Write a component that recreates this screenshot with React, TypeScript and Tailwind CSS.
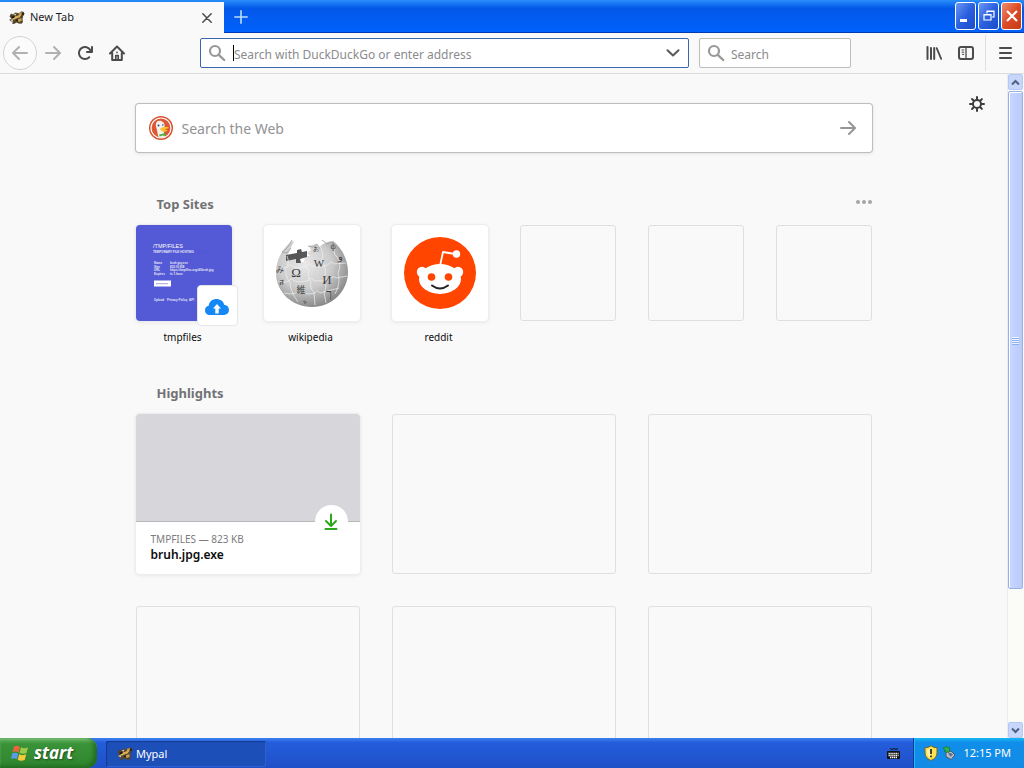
import type { ReactNode } from "react";

const UI = "font-['Noto_Sans','Open_Sans',sans-serif]";

function PalLogo({ className }: { className: string }) {
  return (
    <svg viewBox="0 0 16 16" className={className} aria-hidden="true">
      <path d="M.5 6.500 2 3.500 4 4.500 6.500 2.500 10 3.200 12 1.500 14.500 1.800 15.500 4 14 6.500 13.500 9.500 14 12 12.500 13.800 9.500 13.500 7.500 12.500 5 14 3 13.500 4 11.500 1.500 11.200.3 9.500 2.500 8.500z" fill="#54452c" />
      <path d="M10.500 2.500 13 2.300 12 6 9 7zM8.500 9.500 12.500 8 12.500 11 9.500 12z" fill="#c9a255" />
      <path d="M3 8C6 5.500 8.500 6.200 11.500 4.800L11 7.200 8 8.300 5 9.800z" fill="#dcae55" />
      <path d="M.8 9.700 4.500 9.200 3.500 11.200zM4.500 4.800 7.500 3.500 6.500 5.500z" fill="#e8e2d2" />
      <path d="M2.500 6.500 6 6 5 8 3 8zM13.300 2.200 15.300 3.800 13.500 5.200zM6.500 10 9 9.200 8.500 11.500z" fill="#17130d" />
    </svg>
  );
}

function Lens() {
  return (
    <svg viewBox="0 0 18 18" className="h-[18px] w-[18px] shrink-0" fill="none" stroke="#989899" aria-hidden="true">
      <circle cx="7" cy="7" r="5" strokeWidth="2.200" />
      <path d="m10.800 10.800 5.400 5.200" strokeWidth="2.400" strokeLinecap="round" />
    </svg>
  );
}

function ToolButton({ label, children }: { label: string; children: ReactNode }) {
  return (
    <button type="button" aria-label={label} className="flex h-8 w-8 shrink-0 items-center justify-center text-[#4b4b4d]">
      {children}
    </button>
  );
}

function BackArrow({ className }: { className: string }) {
  return (
    <svg viewBox="0 0 16 16" className={className} fill="currentColor" aria-hidden="true">
      <path d="M15 7H3.414l4.293-4.293a1 1 0 0 0-1.414-1.414l-6 6a1 1 0 0 0 0 1.414l6 6a1 1 0 0 0 1.414-1.414L3.414 9H15a1 1 0 0 0 0-2z" />
    </svg>
  );
}

function TitleBar() {
  const box = "flex h-7 w-[21px] items-center justify-center rounded-[3px] border border-white";
  const blue = "bg-linear-to-br from-[#6b96f2] via-[#2a5fdf] to-[#1c4cc9]";
  return (
    <header className="flex h-[33px] shrink-0 bg-linear-to-b from-[#2b8dfa] from-0% via-[#0358e8] via-25% to-[#0060fa] to-90% shadow-[inset_0_-1px_0_#0039b0]">
      <div className="mt-[2px] flex w-56 items-center bg-[#f9f9fa] pr-2 pl-[9px]">
        <PalLogo className="h-4 w-4" />
        <span className="ml-[5px] flex-1 text-[11px] text-[#1c1c1e]">New Tab</span>
        <button type="button" aria-label="Close tab" className="flex h-[18px] w-[18px] items-center justify-center">
          <svg viewBox="0 0 10 10" className="h-[10px] w-[10px]" stroke="#4b4b4d" strokeWidth="1.500" strokeLinecap="round" aria-hidden="true">
            <path d="m.8.8 8.400 8.400M9.200.8.8 9.200" />
          </svg>
        </button>
      </div>
      <button type="button" aria-label="New tab" className="flex w-[34px] items-center justify-center">
        <svg viewBox="0 0 14 14" className="h-[14px] w-[14px]" stroke="#b9dcff" strokeWidth="1.600" strokeLinecap="round" aria-hidden="true">
          <path d="M7 .8v12.400M.8 7h12.400" />
        </svg>
      </button>
      <div className="flex-1" />
      <div className="flex gap-[2px] pt-[2px] pr-[2px]">
        <button type="button" aria-label="Minimize" className={`${box} ${blue}`}>
          <span className="mt-[9px] mr-[5px] h-[3px] w-[7px] bg-white" />
        </button>
        <button type="button" aria-label="Restore" className={`${box} ${blue}`}>
          <svg viewBox="0 0 12 12" className="h-3 w-3" fill="none" stroke="#fff" aria-hidden="true">
            <path d="M4 3.500V1h7v6H9M4 1.500h7M1 4.500h7V10H1zM1 5h7" strokeWidth="1.200" />
          </svg>
        </button>
        <button type="button" aria-label="Close" className={`${box} bg-linear-to-br from-[#ee8a6c] via-[#dd4b26] to-[#c23a17]`}>
          <svg viewBox="0 0 12 12" className="h-3 w-3" stroke="#fff" strokeWidth="2.200" aria-hidden="true">
            <path d="m1 1 10 10M11 1 1 11" />
          </svg>
        </button>
      </div>
    </header>
  );
}

function Toolbar() {
  return (
    <nav className="flex h-[41px] shrink-0 items-center border-b border-[#dcdcdf] bg-[#f9f9fa] pr-[6px]">
      <button type="button" aria-label="Back" className="ml-[3px] flex h-[34px] w-[34px] shrink-0 items-center justify-center rounded-full border border-[#d3d3d5] bg-[#fbfbfc] text-[#b1b1b3]">
        <BackArrow className="h-4 w-4" />
      </button>
      <button type="button" aria-label="Forward" className="flex h-8 w-8 shrink-0 items-center justify-center text-[#b1b1b3]">
        <BackArrow className="h-4 w-4 rotate-180" />
      </button>
      <ToolButton label="Reload">
        <svg viewBox="0 0 16 16" className="h-4 w-4" fill="currentColor" aria-hidden="true">
          <path d="M15 1a1 1 0 0 0-1 1v2.418A6.995 6.995 0 1 0 8 15a6.954 6.954 0 0 0 4.950-2.050 1 1 0 0 0-1.414-1.414A5.019 5.019 0 1 1 12.549 6H10a1 1 0 0 0 0 2h5a1 1 0 0 0 1-1V2a1 1 0 0 0-1-1z" />
        </svg>
      </ToolButton>
      <ToolButton label="Home">
        <svg viewBox="0 0 16 16" className="h-4 w-4" fill="none" stroke="currentColor" strokeWidth="2" strokeLinecap="round" strokeLinejoin="round" aria-hidden="true">
          <path d="m1 8.500 7-7 7 7M3.200 8v7h9.600V8" />
          <path d="M6.800 15v-4.500h2.400V15M8 7.400v.1" strokeWidth="1.700" />
        </svg>
      </ToolButton>
      <div className="ml-[67px] flex h-[30px] max-w-[489px] flex-1 items-center rounded-[2px] border border-[#3a66b0] bg-white pr-[7px] pl-[7px]">
        <Lens />
        <span className="ml-[7px] h-4 w-px bg-black" />
        <input id="address" aria-label="Address" placeholder="Search with DuckDuckGo or enter address" className="h-full min-w-0 flex-1 pt-[2px] text-[12px] text-black outline-none placeholder:text-[#8b8b8d]" />
        <button type="button" aria-label="Show history" className="flex h-4 w-4 items-center justify-center">
          <svg viewBox="0 0 14 8" className="h-2 w-[14px]" fill="none" stroke="#59595b" strokeWidth="2" strokeLinecap="round" strokeLinejoin="round" aria-hidden="true">
            <path d="m1.500 1.200 5.500 5.300 5.500-5.300" />
          </svg>
        </button>
      </div>
      <div className="ml-[10px] flex h-[30px] w-38 items-center rounded-[2px] border border-[#bdbdbf] bg-white pr-2 pl-[7px]">
        <Lens />
        <input id="engine" aria-label="Search" placeholder="Search" className="ml-[6px] h-full min-w-0 flex-1 pt-[2px] text-[12px] text-black outline-none placeholder:text-[#8b8b8d]" />
      </div>
      <div className="ml-auto flex h-full items-center">
        <ToolButton label="Library">
          <svg viewBox="0 0 16 16" className="h-4 w-4" fill="none" stroke="currentColor" strokeLinecap="round" aria-hidden="true">
            <path d="M1.500 2v12M5 3v11M8.200 3v11" strokeWidth="2" />
            <path d="m10.700 3.200 4.500 10.600" strokeWidth="1.800" />
          </svg>
        </ToolButton>
        <ToolButton label="Sidebars">
          <svg viewBox="0 0 16 16" className="h-4 w-4" fill="none" stroke="currentColor" aria-hidden="true">
            <rect x="1" y="2" width="14" height="12" rx="2" strokeWidth="2" />
            <path d="M8 2v12" strokeWidth="1.300" />
            <path d="M3.500 5h2.700M3.500 7.200h2.700M4 9.400h2.200" strokeWidth="1" />
          </svg>
        </ToolButton>
        <div className="ml-[3px] h-9 w-px bg-[#dfdfe1]" />
        <ToolButton label="Menu">
          <svg viewBox="0 0 16 16" className="ml-[5px] h-4 w-4" stroke="currentColor" strokeWidth="2" strokeLinecap="round" aria-hidden="true">
            <path d="M3 3h11M3 8h11M3 13h11" />
          </svg>
        </ToolButton>
      </div>
    </nav>
  );
}

function DuckLogo() {
  return (
    <svg viewBox="0 0 24 24" className="h-6 w-6" aria-hidden="true">
      <circle cx="12" cy="12" r="12" fill="#d9512f" />
      <circle cx="12" cy="12" r="10" fill="#de5833" stroke="#fff" strokeWidth="1.200" />
      <path d="M8 5.500c1.500-1.300 5-1.200 6.700 1.300 1.100 1.700 1 3.700.8 5.200l-.7 3.500 1.200 5.700c-2 .8-4.600.9-6.500.2L7.700 13C7 10.500 6 8.200 8 5.500z" fill="#f4f1ea" />
      <path d="M11.500 12.200c2-1.200 5.600-1.500 7.800-1 .6.300.2 1-.8 1.300-1.600.5-2.500.6-2.300 1 .4.600 2.400.3 2.200.9-.4 1.200-4 1.500-5.800.5-1.100-.7-1.700-2-1.100-2.700z" fill="#fbc02d" />
      <path d="M10.200 18.500 13 18l3.200-1.200.6 3.200-3.300-.6-3 1z" fill="#4caf3d" />
      <circle cx="9.500" cy="9.500" r="1" fill="#2d4f8e" />
      <circle cx="13.800" cy="9" r=".8" fill="#2d4f8e" />
    </svg>
  );
}

function Globe() {
  return (
    <svg viewBox="0 0 76 72" className="h-[72px] w-[76px]" aria-hidden="true">
      <defs>
        <radialGradient id="globe" cx="40%" cy="35%" r="68%">
          <stop offset="0" stopColor="#e8e8e8" />
          <stop offset=".55" stopColor="#cbcbcb" />
          <stop offset="1" stopColor="#858585" />
        </radialGradient>
      </defs>
      <path d="M17 5 20 4 15 15 13 20 24 20 25 25 30 25 31 19 36 19 33 16 37 13 35 9 42 7 45 10 49 7 54 5 59 4C69 12 74 24 74 35c0 19-16 35-36 35S2 55 2 36C2 23 8 12 17 5z" fill="url(#globe)" />
      <path d="M12 18 23 16 23 13 27 12 28 15 33 14 33 20 26 22 27 26 22 26 22 22 12 24z" fill="#575757" />
      <path d="m18 3-5 8-5 4 5 1 4-5M34 9l5 1 4-3 3 5M48 3l5 4 4-2" fill="none" stroke="#aaa" />
      <g fill="none" stroke="#f0f0f0" strokeWidth=".7">
        <path d="M3 30q6 3 11 0 1-5 5 0 9 2 14-1 2-4 5 0 9 3 17-2 2-4 5 0l12-1M4 44q6 3 11 0 2-4 5 0 9 2 15-1 2-4 5 1 9 1 17-3 2-3 5 0l11-2M10 56q8 2 12 0 3-4 5 0 9 2 14 0 2-4 5 0l19-5" />
        <path d="M13 19q3 7-1 12-1 9 4 14 0 9 8 20M32 24q-3 6 3 9-2 8 2 12-2 6 3 10l1 13M46 9q5 9 1 15 7 7 3 18 4 8 0 13l2 11M61 8q-3 8 2 12 5 7 1 16 3 10-3 21" />
      </g>
      <g fill="#3d3d3d" textAnchor="middle" fontFamily="Liberation Serif, serif">
        <text x="22" y="40" fontSize="13">Ω</text>
        <text x="45" y="30" fontSize="11">W</text>
        <text x="53" y="47" fontSize="13">И</text>
        <text x="27" y="56" fontSize="9" fontFamily="Noto Sans CJK JP, sans-serif">維</text>
        <text x="55" y="61" fontSize="12">ך</text>
        <text x="66" y="23" fontSize="10">و</text>
        <text x="59" y="12" fontSize="8">ф</text>
        <text x="6" y="35" fontSize="8">み</text>
        <text x="7" y="48" fontSize="8">ส</text>
        <text x="31" y="67" fontSize="6">ጉ</text>
        <text x="42" y="14" fontSize="6">あ</text>
      </g>
    </svg>
  );
}

function Snoo() {
  return (
    <svg viewBox="0 0 72 72" className="h-[72px] w-[72px]" aria-hidden="true">
      <circle cx="36" cy="36" r="36" fill="#ff4500" />
      <path d="m36 29 3-14 12 2" fill="none" stroke="#fff" strokeWidth="1.800" strokeLinejoin="round" />
      <circle cx="52.500" cy="17" r="3.700" fill="#fff" />
      <circle cx="18" cy="35" r="5.200" fill="#fff" />
      <circle cx="54" cy="35" r="5.200" fill="#fff" />
      <ellipse cx="36" cy="42" rx="21" ry="15" fill="#fff" />
      <circle cx="27.500" cy="40" r="3.800" fill="#ff4500" />
      <circle cx="44.500" cy="40" r="3.800" fill="#ff4500" />
      <path d="M28 48.500q8 6 16 0" fill="none" stroke="#222" strokeWidth="2" strokeLinecap="round" />
    </svg>
  );
}

function TmpfilesThumb() {
  return (
    <svg viewBox="0 0 96 96" className="h-24 w-24 rounded-[4px]" aria-hidden="true">
      <rect width="96" height="96" fill="#545ad5" />
      <g fill="#fff" fontFamily="Liberation Sans, sans-serif">
        <text x="17" y="23" fontSize="5.500">/TMP/FILES</text>
        <g fontSize="3" fontWeight="700" opacity=".85">
          <text x="17" y="28">TEMPORARY FILE HOSTING</text>
          <text x="18" y="39">Name</text><text x="34" y="39">bruh.jpg.exe</text>
          <text x="18" y="42.500">Size</text><text x="34" y="42.500">823.00 KB</text>
          <text x="18" y="46">URL</text><text x="34" y="46">https://tmpfiles.org/dl/bruh.jpg</text>
          <text x="18" y="49.500">Expires</text><text x="34" y="49.500">in 1 hour</text>
          <text x="18" y="75.500">Upload</text><text x="31" y="75.500">Privacy Policy</text><text x="53" y="75.500">API</text>
        </g>
      </g>
      <rect x="18" y="55.500" width="17" height="6" fill="#fff" />
      <path d="M20 58.700h12" stroke="#a4a6dc" />
    </svg>
  );
}

const card = "rounded-[4px] bg-white shadow-[0_0_0_1px_#ededef,0_1px_4px_rgba(12,12,13,0.1)]";
const empty = "rounded-[3px] border border-[#dfdfe1]";

function Site({ name, children }: { name: string; children: ReactNode }) {
  return (
    <li>
      <a href={`#${name}`} className="block">
        <div className={`relative flex h-24 items-center justify-center ${card}`}>{children}</div>
        <span className="mt-2 -ml-[2px] block h-4 text-center text-[10px] leading-4 text-[#0c0c0d]">{name}</span>
      </a>
    </li>
  );
}

function NewTabPage() {
  return (
    <main className="relative min-w-0 flex-1 overflow-hidden bg-[#f9f9fa]">
      <div className="mx-auto w-[736px] max-w-full pt-[30px]">
        <form className="flex h-12 items-center rounded-[3px] bg-white pr-4 pl-[13px] shadow-[0_0_0_1px_#bebec0,0_1px_4px_rgba(0,0,0,0.15)]">
          <DuckLogo />
          <input id="web" aria-label="Search the Web" placeholder="Search the Web" className="ml-[9px] h-full min-w-0 flex-1 text-[14px] outline-none placeholder:text-[#929294]" />
          <button type="button" aria-label="Submit" className="text-[#969698]">
            <BackArrow className="h-4 w-4 rotate-180" />
          </button>
        </form>

        <section>
          <div className="mt-[43px] flex h-5 items-center justify-between pl-[21px]">
            <h2 className="text-[13px] font-bold text-[#727274]">Top Sites</h2>
            <button type="button" aria-label="Section menu" className="mb-[6px]">
              <svg viewBox="0 0 16 4" className="h-1 w-4" fill="#a5a5a7" aria-hidden="true">
                <circle cx="2" cy="2" r="2" /><circle cx="8" cy="2" r="2" /><circle cx="14" cy="2" r="2" />
              </svg>
            </button>
          </div>
          <ul className="mt-[10px] grid grid-cols-6 gap-8">
            <Site name="tmpfiles">
              <TmpfilesThumb />
              <span className="absolute -right-[6px] -bottom-[5px] flex h-[41px] w-[41px] items-center justify-center rounded-[4px] border border-[#e6e6e8] bg-white">
                <svg viewBox="0 0 24 18" className="mt-[3px] h-[18px] w-6" aria-hidden="true">
                  <path d="M5 17C2 17 0 15 0 12.200 0 9.900 1.500 8.200 3.700 7.800 4 3.500 7.600 1 11.500 1c3.800 0 7 2.200 7.600 5.700C22 7 24 9 24 11.800 24 14.800 22 17 19 17z" fill="#1688f5" />
                  <path d="M12 6 16 10.500H13.700V15.500H10.300V10.500H8z" fill="#fff" />
                </svg>
              </span>
            </Site>
            <Site name="wikipedia"><Globe /></Site>
            <Site name="reddit"><Snoo /></Site>
            {[0, 1, 2].map((i) => <li key={i} className={`h-24 ${empty}`} />)}
          </ul>
        </section>

        <section>
          <div className="mt-[39px] flex h-5 items-center pl-[21px]">
            <h2 className="text-[13px] font-bold text-[#727274]">Highlights</h2>
          </div>
          <ul className="mt-[10px] grid grid-cols-3 gap-8">
            <li>
              <a href="#bruh" className={`block h-40 overflow-hidden ${card}`}>
                <div className="relative h-27 border-b border-[#b9b9bd] bg-[#d7d7db]">
                  <span className="absolute right-3 -bottom-[17px] flex h-[33px] w-[33px] items-center justify-center rounded-full bg-white">
                    <svg viewBox="0 0 14 17" className="h-[17px] w-[14px]" fill="none" stroke="#2da51c" strokeWidth="2" strokeLinecap="round" strokeLinejoin="round" aria-hidden="true">
                      <path d="M7 1.500v11M2 8l5 5 5-5M1.500 16h11" />
                    </svg>
                  </span>
                </div>
                <div className="px-[15px] pt-[9px]">
                  <p className="text-[10px] leading-4 text-[#7b7b7d]">TMPFILES — 823 KB</p>
                  <p className="text-[12px] leading-4 font-semibold text-[#0c0c0d]">bruh.jpg.exe</p>
                </div>
              </a>
            </li>
            {[0, 1, 2, 3, 4].map((i) => <li key={i} className={`h-40 ${empty}`} />)}
          </ul>
        </section>
      </div>
      <button type="button" aria-label="Customize" className="absolute top-[22px] right-[22px]">
        <svg viewBox="0 0 16 16" className="h-4 w-4" fill="none" stroke="#3d3d3f" strokeWidth="2" strokeLinecap="round" aria-hidden="true">
          <circle cx="8" cy="8" r="4" />
          <path d="M8 1v2M8 13v2M1 8h2M13 8h2M3.050 3.050l1.200 1.200M11.700 11.700l1.200 1.200M3.050 12.950l1.200-1.200M11.700 4.300l1.200-1.200" />
        </svg>
      </button>
    </main>
  );
}

function ScrollArrow({ label, d }: { label: string; d: string }) {
  return (
    <button type="button" aria-label={label} className="flex h-4 shrink-0 items-center justify-center rounded-[2px] border border-[#b4c8f6] bg-[#c8d6fb]">
      <svg viewBox="0 0 9 7" className="h-[7px] w-[9px]" fill="none" stroke="#4d6185" strokeWidth="2" aria-hidden="true">
        <path d={d} />
      </svg>
    </button>
  );
}

function ScrollBar() {
  return (
    <div className="flex w-[17px] shrink-0 flex-col border-l border-[#eeede5] bg-[#fbfbf8] pr-px">
      <ScrollArrow label="Scroll up" d="m1 5.500 3.500-3.500L8 5.500" />
      <div className="flex min-h-0 flex-1 flex-col pt-px">
        <div className="flex basis-[79%] flex-col items-center justify-center gap-px rounded-[2px] border border-[#98b0e8] bg-linear-to-r from-[#c9d6ff] to-[#b9cbfa] shadow-[inset_1px_1px_0_#fff]">
          {[0, 1, 2, 3].map((i) => <span key={i} className="h-px w-[7px] bg-[#eef4fe] shadow-[0_1px_0_#8cb0f8]" />)}
        </div>
      </div>
      <ScrollArrow label="Scroll down" d="m1 1.500 3.500 3.500L8 1.500" />
    </div>
  );
}

function TaskBar() {
  return (
    <footer className="flex h-[30px] shrink-0 bg-linear-to-b from-[#3c81f0] from-0% via-[#245ddb] via-15% to-[#1f50c8] to-100% text-white">
      <button type="button" className="flex w-[97px] items-center rounded-r-[10px] bg-linear-to-b from-[#64b360] from-0% via-[#3a9338] via-20% to-[#2f842e] to-100% pl-[11px] shadow-[inset_-3px_-2px_4px_#1f6a20,inset_0_2px_2px_#77bd74]">
        <svg viewBox="0 0 18 18" className="h-[18px] w-[18px]" aria-hidden="true">
          <path d="M3 2.500Q6 .8 9 3L7.500 8.500Q5 6.800 1.500 8z" fill="#e8663a" />
          <path d="M10 3.300Q13 5 17 3.300L15.500 9Q12 10.500 8.500 8.800z" fill="#9ccb45" />
          <path d="M1.300 9.200Q4.500 8 7.200 9.800L5.700 15.300Q3 13.500 0 15z" fill="#5b9be8" />
          <path d="M8.200 10.200Q12 12 15.200 10.300L13.700 16Q10 17.600 6.700 15.800z" fill="#f8c93c" />
        </svg>
        <span className="ml-[5px] font-['Open_Sans',sans-serif] text-[17px] leading-6 font-bold italic [text-shadow:1px_1px_2px_#1d4d1c]">start</span>
      </button>
      <button type="button" className="mt-[3px] mb-px ml-[9px] flex w-40 items-center rounded-[2px] bg-[#1d4fb9] pl-[11px] shadow-[inset_1px_1px_1px_#143a91,inset_-1px_-1px_0_#2f62cf]">
        <PalLogo className="h-4 w-4" />
        <span className="ml-[3px] text-[11px]">Mypal</span>
      </button>
      <div className="flex-1" />
      <div className="mr-[13px] flex items-center">
        <svg viewBox="0 0 13 14" className="h-[14px] w-[13px]" aria-hidden="true">
          <path d="M3 2.500 5 3.500 7 2.500 9 3.500 11 2.500" fill="none" stroke="#111" />
          <rect y="5" width="13" height="8" rx="1" fill="#111" />
          <path d="M1.500 7.500h10M1.500 9.500h10M3 11.500h7" stroke="#fff" strokeWidth="1.300" strokeDasharray="1.300 .6" />
        </svg>
      </div>
      <div className="flex items-center border-l border-[#0b3f9c] bg-linear-to-b from-[#19b9f5] from-0% via-[#108ee9] via-15% to-[#128be6] to-100% pr-[13px] pl-[10px] shadow-[inset_1px_0_0_#25b5f7]">
        <svg viewBox="0 0 14 16" className="h-4 w-[14px]" aria-hidden="true">
          <path d="M7 .8Q10 3 13 2.600V8Q13 13 7 15.500 1 13 1 8V2.600Q4 3 7 .8z" fill="#ffe14d" stroke="#6d6533" />
          <path d="M3 4.500Q5 4.500 7 3v10Q3 11 3 8z" fill="#fff3a6" />
          <path d="M7 4v5M7 10.500v1.800" stroke="#222" strokeWidth="1.700" />
        </svg>
        <svg viewBox="0 0 14 14" className="ml-[4px] h-[14px] w-[14px]" aria-hidden="true">
          <path d="m4 6 5-1 4 4-4 4.500-5-3z" fill="#b8c0cc" stroke="#4a5568" />
          <path d="m6 7.500 3-.8 2 2-2.500 2z" fill="#63718c" />
          <path d="m1 2 4-1.500 1 1.500 2-.5-1 5-5-1 1.700-1.200z" fill="#32b34a" stroke="#11712a" strokeWidth=".6" />
        </svg>
        <time className="ml-[7px] text-[11px]">12:15 PM</time>
      </div>
    </footer>
  );
}

export default function App() {
  return (
    <div className={`flex h-screen flex-col overflow-hidden ${UI}`}>
      <TitleBar />
      <Toolbar />
      <div className="flex min-h-0 flex-1">
        <NewTabPage />
        <ScrollBar />
      </div>
      <TaskBar />
    </div>
  );
}
